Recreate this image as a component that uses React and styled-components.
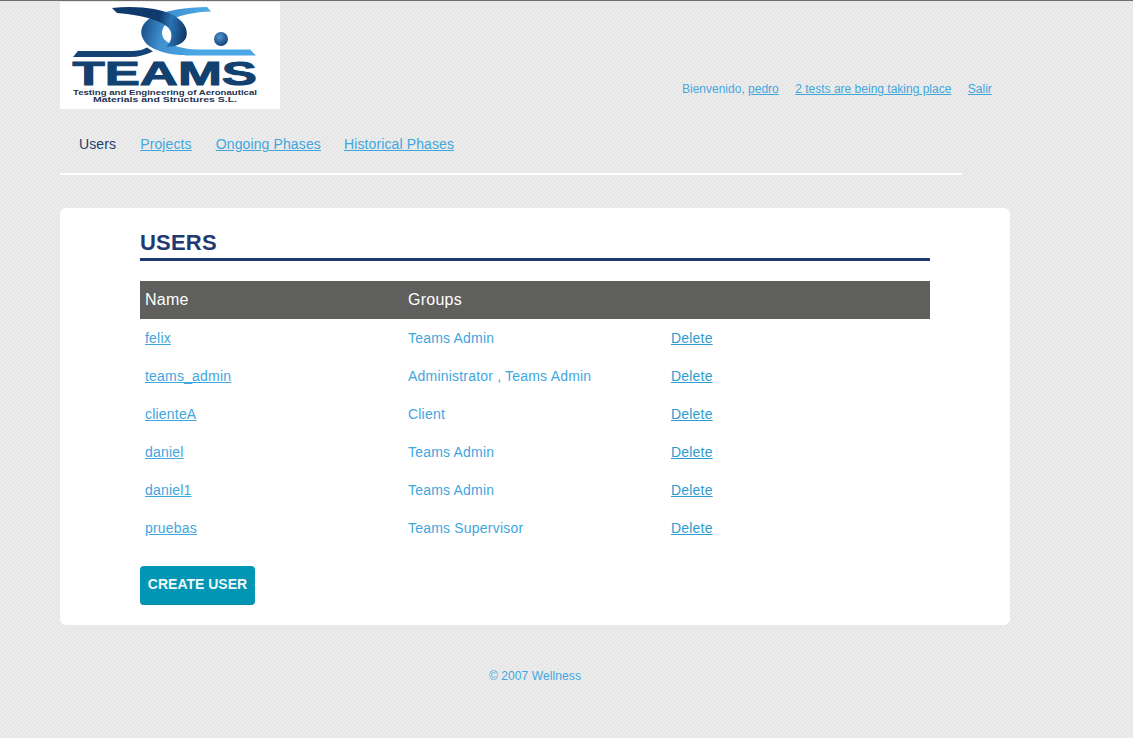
import React from "react";
import styled, { createGlobalStyle } from "styled-components";

const GlobalStyle = createGlobalStyle`
  html, body {
    margin: 0;
    padding: 0;
  }
  body {
    min-height: 738px;
    box-sizing: border-box;
    border-top: 1px solid #6e6e6e;
    font-family: "Liberation Sans", Arial, sans-serif;
    background-color: #e9e9e9;
    background-image: repeating-conic-gradient(#e6e6e6 0 25%, #ececec 0 50%);
    background-size: 4px 4px;
  }
`;

const Page = styled.div`
  width: 950px;
  margin-left: 60px;
`;

const Header = styled.header`
  display: flex;
  height: 108px;
  padding-top: 1px;
  box-sizing: border-box;
`;

const LogoBox = styled.svg`
  display: block;
  width: 220px;
  height: 107px;
  background: #fff;
  flex: none;
`;

const UserBar = styled.div`
  display: flex;
  gap: 16.5px;
  margin: 80px 0 0 402px;
  font-size: 12px;
  line-height: 14px;
  color: #4aa8e0;
  white-space: nowrap;
`;

const Link = styled.a`
  color: #3fa6de;
  text-decoration: underline;
`;

const Nav = styled.nav`
  display: flex;
  width: 902px;
  height: 66px;
  box-sizing: border-box;
  padding: 27px 0 0 19px;
  border-bottom: 2px solid #fff;
  font-size: 14px;
  line-height: 16px;
  letter-spacing: 0.12px;
`;

const NavItem = styled.span`
  margin-right: ${(p) => p.$gap}px;
  color: #1c3f6e;
`;

const Panel = styled.main`
  margin-top: 33px;
  height: 417px;
  box-sizing: border-box;
  padding: 22px 80px 0;
  background: #fff;
  border-radius: 6px;
`;

const Title = styled.h1`
  margin: 0 0 20px;
  height: 28px;
  border-bottom: 3px solid #1f3a70;
  font-size: 22px;
  line-height: 25px;
  letter-spacing: 0.2px;
  font-weight: bold;
  color: #1f3a70;
  text-transform: uppercase;
`;

const UsersTable = styled.table`
  width: 790px;
  border-collapse: collapse;
  table-layout: fixed;
`;

const Column = styled.col`
  width: 263px;
`;

const HeadCell = styled.th`
  height: 38px;
  padding: 0 5px;
  background: #5f5f5d;
  color: #fff;
  font-size: 16px;
  letter-spacing: 0.25px;
  font-weight: normal;
  text-align: left;
`;

const Cell = styled.td`
  height: 38px;
  padding: 0 5px;
  font-size: 14px;
  letter-spacing: 0.2px;
  color: #3fa6de;
`;

const DeleteLink = styled(Link)`
  color: #2f9ccf;
`;

const CreateButton = styled.button`
  display: block;
  width: 115px;
  height: 39px;
  margin-top: 19px;
  padding: 0 0 2px;
  border: 0;
  border-bottom: 1px solid #0a87a3;
  border-radius: 4px;
  background: #0096b4;
  color: #f0f6f8;
  font-family: inherit;
  font-size: 14px;
  font-weight: bold;
`;

const Footer = styled.footer`
  margin-top: 44px;
  width: 950px;
  text-align: center;
  font-size: 12px;
  line-height: 14px;
  letter-spacing: 0.1px;
  color: #3fa6de;
`;

const users = [
  ["felix", "Teams Admin"],
  ["teams_admin", "Administrator , Teams Admin"],
  ["clienteA", "Client"],
  ["daniel", "Teams Admin"],
  ["daniel1", "Teams Admin"],
  ["pruebas", "Teams Supervisor"],
];

function Logo() {
  return (
    <LogoBox viewBox="0 0 220 107">
      <defs>
        <linearGradient id="blob" gradientUnits="userSpaceOnUse" x1="80" y1="25" x2="135" y2="40">
          <stop offset="0" stopColor="#164a82" />
          <stop offset="0.4" stopColor="#3f8fd0" />
          <stop offset="1" stopColor="#4ba6e4" />
        </linearGradient>
        <linearGradient id="darkBlob" gradientUnits="userSpaceOnUse" x1="98" y1="25" x2="127" y2="30">
          <stop offset="0" stopColor="#103a6c" />
          <stop offset="0.4" stopColor="#2a74b4" />
          <stop offset="1" stopColor="#0e3765" />
        </linearGradient>
        <radialGradient id="ball" cx="0.4" cy="0.35" r="0.7">
          <stop offset="0" stopColor="#4d94d0" />
          <stop offset="1" stopColor="#123f74" />
        </radialGradient>
      </defs>
      <path
        d="M147 5 L151 9.5 C135 10 118 13 110 19 C102 24 100 31 104 37 C110 44 124 47 137 47.5 L190 47.5 L196 53.5 L128 53.5 C110 53 92 49 85 40 C78 31 81 21 92 15 C105 8 127 5.5 147 5 Z"
        fill="url(#blob)"
      />
      <path
        d="M52 6 C75 3.5 100 6 113 13 C124 19 129 28 126 36 C123 42 115 45 106 45 C111 40 113 34 110 28 C106 20 85 13 57 11 Z"
        fill="url(#darkBlob)"
      />
      <path
        d="M13 55 L18 49 L70 49 C78 49 83 48 87 45.5 L93 49.5 C86 53 78 55 70 55 Z"
        fill="#134375"
      />
      <circle cx="161" cy="37" r="7" fill="url(#ball)" />
      <text
        x="12.5"
        y="83"
        fontFamily="Liberation Sans, sans-serif"
        fontWeight="bold"
        fontSize="34"
        textLength="184.5"
        lengthAdjust="spacingAndGlyphs"
        fill="#12416f"
        stroke="#12416f"
        strokeWidth="1"
      >
        TEAMS
      </text>
      <text
        x="13"
        y="92.5"
        fontFamily="Liberation Sans, sans-serif"
        fontWeight="bold"
        fontSize="6.5"
        textLength="184"
        lengthAdjust="spacingAndGlyphs"
        fill="#23344f"
      >
        Testing and Engineering of Aeronautical
      </text>
      <text
        x="33"
        y="100"
        fontFamily="Liberation Sans, sans-serif"
        fontWeight="bold"
        fontSize="6.5"
        textLength="144"
        lengthAdjust="spacingAndGlyphs"
        fill="#23344f"
      >
        Materials and Structures S.L.
      </text>
    </LogoBox>
  );
}

export default function App() {
  return (
    <Page>
      <GlobalStyle />
      <Header>
        <Logo />
        <UserBar>
          <span>
            Bienvenido, <Link href="#">pedro</Link>
          </span>
          <Link href="#">2 tests are being taking place</Link>
          <Link href="#">Salir</Link>
        </UserBar>
      </Header>
      <Nav>
        <NavItem $gap={24}>Users</NavItem>
        <NavItem $gap={24}>
          <Link href="#">Projects</Link>
        </NavItem>
        <NavItem $gap={23}>
          <Link href="#">Ongoing Phases</Link>
        </NavItem>
        <NavItem $gap={0}>
          <Link href="#">Historical Phases</Link>
        </NavItem>
      </Nav>
      <Panel>
        <Title>Users</Title>
        <UsersTable>
          <colgroup>
            <Column />
            <Column />
            <col />
          </colgroup>
          <thead>
            <tr>
              <HeadCell>Name</HeadCell>
              <HeadCell>Groups</HeadCell>
              <HeadCell />
            </tr>
          </thead>
          <tbody>
            {users.map(([name, groups]) => (
              <tr key={name}>
                <Cell>
                  <Link href="#">{name}</Link>
                </Cell>
                <Cell>{groups}</Cell>
                <Cell>
                  <DeleteLink href="#">Delete</DeleteLink>
                </Cell>
              </tr>
            ))}
          </tbody>
        </UsersTable>
        <CreateButton>CREATE USER</CreateButton>
      </Panel>
      <Footer>© 2007 Wellness</Footer>
    </Page>
  );
}
